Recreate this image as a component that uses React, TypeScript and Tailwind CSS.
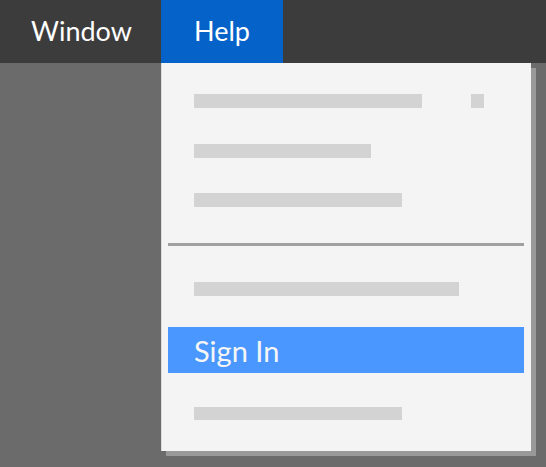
export default function App() {
  return (
    <div className="h-[467px] w-[546px] overflow-hidden bg-[#6b6b6b] font-['Lato','Open_Sans',sans-serif]">
      {/* Menu bar */}
      <div className="flex h-[63px] bg-[#3c3c3c] text-[27px] leading-none text-white">
        <div className="flex w-[161px] items-center justify-center pb-[3px] pl-[2px]">Window</div>
        <div className="flex w-[122px] items-center justify-center bg-[#0562c9] pb-[3px]">Help</div>
      </div>

      {/* Dropdown */}
      <div className="ml-[161px] flex h-[388px] w-[370px] flex-col border-l border-[#dcdcdc] bg-[#f4f4f4] shadow-[5px_5px_0_#999999]">
        <div className="mt-[31px] flex items-center pl-[32px]">
          <div className="h-[14px] w-[228px] bg-[#d3d3d3]" />
          <div className="ml-[49px] h-[14px] w-[13px] bg-[#d3d3d3]" />
        </div>
        <div className="mt-[36px] pl-[32px]">
          <div className="h-[14px] w-[177px] bg-[#d3d3d3]" />
        </div>
        <div className="mt-[35px] pl-[32px]">
          <div className="h-[14px] w-[208px] bg-[#d3d3d3]" />
        </div>
        <div className="ml-[6px] mr-[7px] mt-[36px] h-[3px] bg-[#a0a0a0]" />
        <div className="mt-[36px] pl-[32px]">
          <div className="h-[14px] w-[265px] bg-[#d3d3d3]" />
        </div>
        <div className="ml-[6px] mr-[7px] mt-[31px] flex h-[46px] items-center bg-[#4a98ff] pl-[26px] text-[29px] leading-none text-[#f6f6f6]">
          Sign In
        </div>
        <div className="mt-[34px] pl-[32px]">
          <div className="h-[13px] w-[208px] bg-[#d3d3d3]" />
        </div>
      </div>
    </div>
  );
}
